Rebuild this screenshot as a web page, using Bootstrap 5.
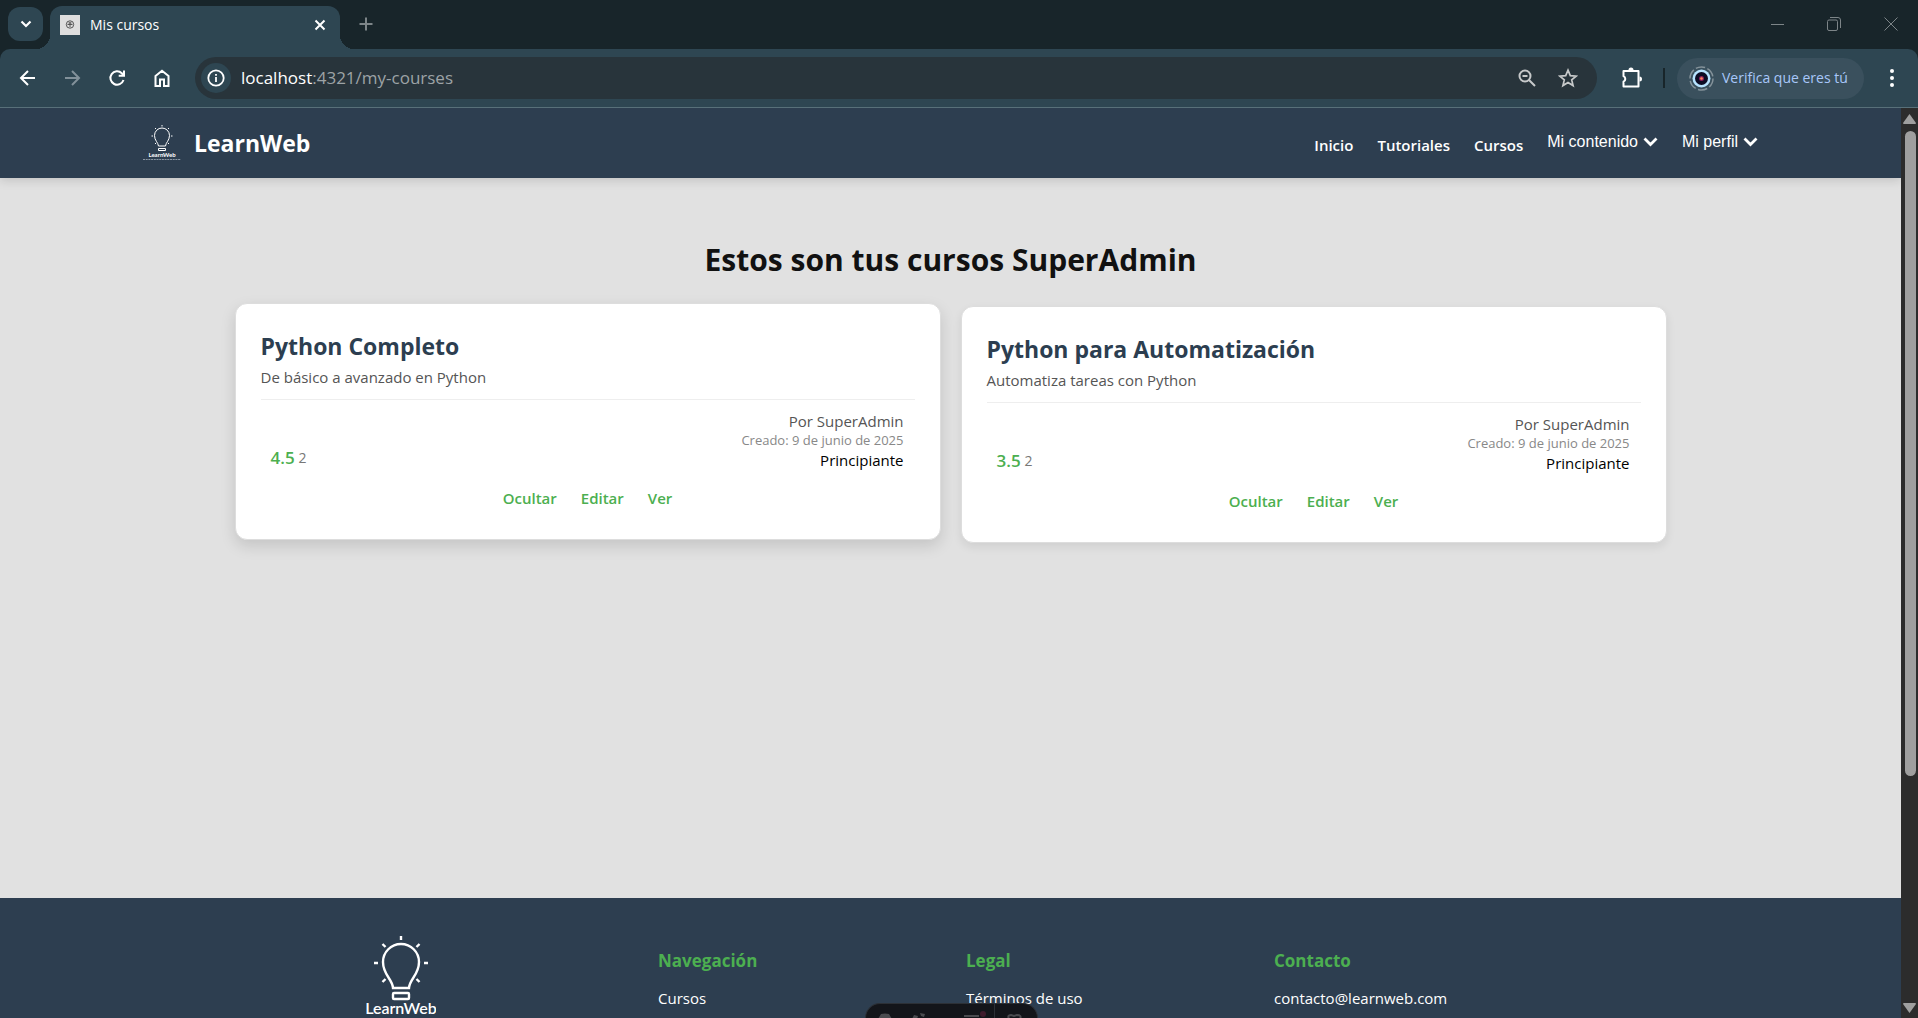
<!DOCTYPE html>
<html lang="es">
<head>
<meta charset="utf-8">
<meta name="viewport" content="width=device-width, initial-scale=1">
<title>Mis cursos</title>
<link href="https://cdn.jsdelivr.net/npm/bootstrap@5.3.0/dist/css/bootstrap.min.css" rel="stylesheet">
<style>
body{font-family:"Open Sans","Noto Sans",sans-serif;font-size:15px;line-height:20px;color:#000;background:#e1e1e1}
a{text-decoration:none}
svg{display:block;flex:none}
.window{height:100vh;background:#18252a}
/* tab strip */
.tabstrip{height:49px;padding:7px 0 0 8px}
.chip{width:35px;height:34px;border:0;border-radius:12px;background:#2e4652;color:#fff;padding:0}
.tab{width:290px;height:43px;margin:-1px 0 0 7px;padding:0 13px 6px 10px;background:#2e4652;border-radius:12px 12px 0 0;color:#fff;font-size:14px;position:relative}
.tab::before,.tab::after{content:"";position:absolute;bottom:0;width:14px;height:14px}
.tab::before{left:-14px;background:radial-gradient(circle at 0 0,transparent 14px,#2e4652 14px)}
.tab::after{right:-14px;background:radial-gradient(circle at 100% 0,transparent 14px,#2e4652 14px)}
.tabtitle{margin-left:10px}
.plain{background:none;border:0;padding:0;color:#fff}
.plain.newtab{margin-left:19px;color:#7d8588;height:34px}
.winctl{height:34px;gap:43px;padding-right:20px}
.winctl .plain{color:#7d8588}
/* toolbar */
.toolbar{height:59px;background:#2e4652;border-bottom:1px solid #587079;border-radius:10px 10px 0 0;padding:8px 22px 8px 16px}
.navicons{gap:23px;width:179px}
.omnibox{height:42px;border-radius:21px;background:#28343b;padding:0 19px 0 6px}
.infodot{width:30px;height:30px;border-radius:50%;background:#2e4652}
.address{padding-left:10px;color:#9da3a6;font-size:17px;outline:0;min-width:0}
.address b{font-weight:400;color:#fff}
.zoomout{margin-right:22px}
.vbar{width:2px;height:20px;background:#18252a;margin:0 12px 0 20px}
.profile{height:41px;width:187px;border-radius:21px;border:0;background:#3a505d;color:#a8c7fa;font-size:14px;padding:0 0 0 12px;gap:8px}
/* page */
.page{overflow:hidden;min-width:0;position:relative}
.site-header{height:70px;background:#2d3e50;padding:0 143px;box-shadow:0 2px 10px rgba(0,0,0,.15);position:relative}
.brandlink{gap:13px}
.brandname{font-size:23px;line-height:30px;font-weight:700;color:#fff}
.menu{gap:24px}
.menu a{color:#fff;font-size:15px;font-weight:600;margin-top:3px}
.menu button{font:500 16px/20px "Liberation Sans",Arial,sans-serif;color:#fff;gap:5px;margin-top:-3px}
.site-main{min-height:720px;padding:62px 16px 0;background:#e1e1e1}
.headline{font-size:30px;line-height:40px;font-weight:700;color:#111;margin-bottom:26px}
.courses{max-width:1432px;gap:20px}
.course{flex:1 1 0;background:#fff;border:1px solid #ddd;border-radius:12px;padding:26px 25px 31px;box-shadow:0 4px 10px rgba(0,0,0,.08)}
.course.raised{box-shadow:0 6px 15px rgba(0,0,0,.13);margin-top:-3px;margin-bottom:3px}
.course h2{font-size:23px;line-height:32px;font-weight:700;color:#2c3e50;margin:0 0 5px}
.course .desc{color:#555;margin:0 0 12px}
.meta{border-top:1px solid #eee;padding:11px 11px 0 10px}
.rating{gap:4px;padding-bottom:2px}
.score{color:#4caf50;font-size:17px;font-weight:600}
.votes{color:#777;font-size:14px}
.created{color:#888;font-size:13px;line-height:19px}
.author{color:#555}
.actions{gap:24px;margin-top:18px}
.actions a{color:#4caf50;font-size:15px;font-weight:600}
.site-footer{background:#2d3e50;color:#fff;padding:38px 300px 60px}
.site-footer .cols>div{width:308px}
.site-footer .cols>.mark-col{width:358px;padding-left:66px}
.site-footer h3{font-size:17px;line-height:24px;font-weight:700;color:#4caf50;margin:13px 0 15px}
.site-footer a{color:#fff;font-size:15px;line-height:20px}
.devbar{position:absolute;bottom:0;left:50%;width:173px;height:15px;margin-left:-86px;background:#13151a;border-radius:18px 18px 0 0;border:1px solid #2c3036;border-bottom:0;overflow:hidden}
.scroller{width:17px;background:#2c2c2c;padding:6px 0 5px}
.thumb{width:11px;height:645px;border-radius:6px;background:#9f9f9f;margin:7px 0 0 2px}
</style>
</head>
<body>
<div class="window d-flex flex-column">
  <div class="tabstrip d-flex flex-shrink-0">
    <button class="chip d-flex align-items-center justify-content-center" aria-label="Buscar pestañas"><svg width="12" height="8" viewBox="0 0 12 8" fill="none" stroke="currentColor" stroke-width="2.200"><path d="M1.500 1.500L6 6l4.500-4.500"/></svg></button>
    <div class="tab d-flex align-items-center">
      <svg width="20" height="20" viewBox="0 0 20 20"><path fill="#dedede" d="M0 0h20v20H0z"/><g fill="none" stroke="#555"><circle cx="10" cy="9.500" r="3.700"/><path d="M7.500 9.500h5M10 7v5M8.500 8h3"/></g></svg>
      <span class="tabtitle flex-fill">Mis cursos</span>
      <button class="plain" aria-label="Cerrar pestaña"><svg width="14" height="12" viewBox="0 0 14 12" stroke="currentColor" stroke-width="2"><path d="M2.500 1.500l9 9M11.500 1.500l-9 9"/></svg></button>
    </div>
    <button class="plain newtab" aria-label="Nueva pestaña"><svg width="14" height="14" viewBox="0 0 14 14" stroke="currentColor" stroke-width="2"><path d="M7 .5v13M.5 7h13"/></svg></button>
    <div class="winctl d-flex align-items-center ms-auto">
      <button class="plain" aria-label="Minimizar"><svg width="13" height="13" viewBox="0 0 13 13" stroke="currentColor"><path d="M0 6.500h13"/></svg></button>
      <button class="plain" aria-label="Restaurar"><svg width="14" height="14" viewBox="0 0 14 14" fill="none" stroke="currentColor"><rect x=".5" y="3" width="10" height="10.500" rx="1.500"/><path d="M3 .5h8a2.500 2.500 0 0 1 2.500 2.500v8"/></svg></button>
      <button class="plain" aria-label="Cerrar"><svg width="14" height="14" viewBox="0 0 14 14" stroke="currentColor"><path d="M.5.5l13 13M13.500.5l-13 13"/></svg></button>
    </div>
  </div>
  <div class="toolbar d-flex align-items-center flex-shrink-0">
    <div class="navicons d-flex align-items-center">
      <button class="plain" aria-label="Atrás"><svg width="22" height="18" viewBox="0 0 22 18" fill="none" stroke="#fff" stroke-width="2"><path d="M19 9H5.500M12 2L5 9l7 7"/></svg></button>
      <button class="plain" aria-label="Adelante"><svg width="22" height="18" viewBox="0 0 22 18" fill="none" stroke="#82919a" stroke-width="2"><path d="M4 9h13.500M11 2l7 7-7 7"/></svg></button>
      <button class="plain" aria-label="Recargar"><svg width="22" height="18" viewBox="0 0 22 18" fill="none" stroke="#fff" stroke-width="2"><path d="M17.500 11A6.700 6.700 0 1 1 15.800 4.200L18 6.500M18 1.500v5.300h-5.300"/></svg></button>
      <button class="plain" aria-label="Inicio"><svg width="22" height="18" viewBox="0 0 22 18" fill="none" stroke="#fff" stroke-width="2"><path d="M4.500 7L11 1.800 17.500 7v10H13v-6.500H9V17H4.500z"/></svg></button>
    </div>
    <div class="omnibox d-flex align-items-center flex-fill">
      <span class="infodot d-flex align-items-center justify-content-center"><svg width="18" height="18" viewBox="0 0 18 18" fill="none" stroke="#fff" stroke-width="1.800"><circle cx="9" cy="9" r="7.700"/><path d="M9 8v5M9 5v1.800"/></svg></span>
      <div class="address flex-fill" role="textbox" aria-label="Dirección" contenteditable="true" spellcheck="false"><b>localhost</b>:4321/my-courses</div>
      <button class="plain zoomout" aria-label="Zoom"><svg width="18" height="18" viewBox="0 0 18 18" fill="none" stroke="#c7c9ca" stroke-width="2"><circle cx="7" cy="7" r="5.500"/><path d="M11 11l6 6M4.500 7h5"/></svg></button>
      <button class="plain" aria-label="Marcador"><svg width="20" height="20" viewBox="0 0 20 20" fill="none" stroke="#c7c9ca" stroke-width="1.700"><path d="M10 2.200l2.300 5.400 5.900.5-4.500 3.800 1.400 5.700-5.100-3.100-5.100 3.100 1.400-5.700L1.800 8.100l5.900-.5z"/></svg></button>
    </div>
    <div class="d-flex align-items-center">
      <button class="plain ms-4" aria-label="Extensiones"><svg width="22" height="22" viewBox="0 0 22 22"><path fill="none" stroke="#fff" stroke-width="2" stroke-linejoin="round" d="M2.500 4H17.500v15.500H2.500v-4.800a3 3 0 0 0 0-5.500z"/><path fill="#fff" d="M7.500 3a2.500 2.500 0 0 1 5 0zM18.500 9.500a2.500 2.500 0 0 1 0 5z"/></svg></button>
      <span class="vbar"></span>
      <button class="profile d-flex align-items-center"><svg width="25" height="25" viewBox="0 0 25 25"><circle cx="12.500" cy="12.500" r="11.500" fill="none" stroke="#84929a" stroke-width="1.500" stroke-dasharray="9.500 2.500"/><circle cx="12.500" cy="12.500" r="9" fill="#b7e3ff"/><circle cx="12.500" cy="12.500" r="6.500" fill="#0c0c24"/><circle cx="12.500" cy="12.500" r="2.500" fill="#8c1f5a"/><circle cx="12.500" cy="12.500" r="1.300" fill="#ff8a5c"/></svg>Verifica que eres tú</button>
      <button class="plain ms-4" aria-label="Más"><svg width="8" height="18" viewBox="0 0 8 18" fill="#fff"><circle cx="4" cy="2" r="2"/><circle cx="4" cy="9" r="2"/><circle cx="4" cy="16" r="2"/></svg></button>
    </div>
  </div>
  <div class="d-flex flex-fill overflow-hidden">
    <div class="page flex-fill">
      <header class="site-header d-flex align-items-center justify-content-between">
        <a href="#" class="brandlink d-flex align-items-center">
          <svg width="38" height="38" viewBox="0 0 38 38" fill="none" stroke="#fff"><path d="M15.500 22c-.3-3.500-4-5.500-4-10.500a7.500 7.500 0 0 1 15 0c0 5-3.700 7-4 10.500z"/><path d="M15.500 24.500h7v2h-7zM19 1v1.500M12 4l1 1M26 4l-1 1M8.500 12h1.500M28 12h1.500M12 20l1-1M26 20l-1-1"/><text x="19" y="33" fill="#fff" stroke="none" text-anchor="middle" font-family="Lato,sans-serif" font-weight="700" font-size="6">LearnWeb</text><path d="M0 35.500h38" stroke="#8b97a4" stroke-dasharray="2 .7"/></svg>
          <span class="brandname">LearnWeb</span>
        </a>
        <nav class="menu d-flex align-items-center">
          <a href="#">Inicio</a><a href="#">Tutoriales</a><a href="#">Cursos</a>
          <button class="plain d-flex align-items-center">Mi contenido <svg width="15" height="10" viewBox="0 0 15 10" fill="none" stroke="currentColor" stroke-width="2.800"><path d="M1.500 1.500l6 6 6-6"/></svg></button>
          <button class="plain d-flex align-items-center">Mi perfil <svg width="15" height="10" viewBox="0 0 15 10" fill="none" stroke="currentColor" stroke-width="2.800"><path d="M1.500 1.500l6 6 6-6"/></svg></button>
        </nav>
      </header>
      <main class="site-main">
        <h1 class="headline text-center">Estos son tus cursos SuperAdmin</h1>
        <div class="courses d-flex mx-auto">
          <article class="course raised">
            <h2>Python Completo</h2>
            <p class="desc">De básico a avanzado en Python</p>
            <div class="meta d-flex justify-content-between align-items-end">
              <div class="rating d-flex align-items-center"><span class="score">4.5</span><span class="votes">2</span></div>
              <div class="text-end"><div class="author">Por SuperAdmin</div><div class="created">Creado: 9 de junio de 2025</div><div>Principiante</div></div>
            </div>
            <div class="actions d-flex justify-content-center"><a href="#">Ocultar</a><a href="#">Editar</a><a href="#">Ver</a></div>
          </article>
          <article class="course">
            <h2>Python para Automatización</h2>
            <p class="desc">Automatiza tareas con Python</p>
            <div class="meta d-flex justify-content-between align-items-end">
              <div class="rating d-flex align-items-center"><span class="score">3.5</span><span class="votes">2</span></div>
              <div class="text-end"><div class="author">Por SuperAdmin</div><div class="created">Creado: 9 de junio de 2025</div><div>Principiante</div></div>
            </div>
            <div class="actions d-flex justify-content-center"><a href="#">Ocultar</a><a href="#">Editar</a><a href="#">Ver</a></div>
          </article>
        </div>
      </main>
      <footer class="site-footer">
        <div class="cols d-flex">
          <div class="mark-col"><svg width="70" height="90" viewBox="0 0 70 90" fill="none" stroke="#fff" stroke-width="2.400"><path d="M27 52c-.5-9-10-13-10-26a18 18 0 0 1 36 0c0 13-9.500 17-10 26z"/><rect x="27" y="57" width="16" height="6" rx="1"/><path d="M35 0v4M16.500 8l3 3M53.500 8l-3 3M8 27h4M58 27h4M16.500 46l3-3M53.500 46l-3-3"/><text x="35" y="78" fill="#fff" stroke="none" text-anchor="middle" font-family="Lato,sans-serif" font-weight="600" font-size="16">LearnWeb</text></svg></div>
          <div><h3>Navegación</h3><a href="#">Cursos</a></div>
          <div><h3>Legal</h3><a href="#">Términos de uso</a></div>
          <div><h3>Contacto</h3><a href="#">contacto@learnweb.com</a></div>
        </div>
      </footer>
      <div class="devbar"><svg width="172" height="15" viewBox="0 0 172 15" fill="#4a4b4f"><path d="M12 15l3-5q4-1 8 0l3 5zM54 9l5 1-1 3-3-1zM48 11l4 1-1 3h-5zM98 11h15v2H98z"/><path d="M143 15q-2-4 2-4l3 1 3-1q5 0 3 4z" fill="none" stroke="#4a4b4f" stroke-width="2"/><circle cx="117" cy="10" r="3" fill="#3f1b2c"/><path fill="#2c3036" d="M128 0h1v15h-1z"/></svg></div>
    </div>
    <div class="scroller d-flex flex-column align-items-center flex-shrink-0">
      <svg width="13" height="10" viewBox="0 0 13 10" fill="#9f9f9f"><path d="M6.500 0L13 9q0 1-1 1H1Q0 10 0 9z"/></svg>
      <div class="thumb"></div>
      <svg class="mt-auto" width="13" height="10" viewBox="0 0 13 10" fill="#9f9f9f"><path d="M6.500 10L13 1q0-1-1-1H1Q0 0 0 1z"/></svg>
    </div>
  </div>
</div>
<script src="https://cdn.jsdelivr.net/npm/bootstrap@5.3.0/dist/js/bootstrap.bundle.min.js"></script>
</body>
</html>
